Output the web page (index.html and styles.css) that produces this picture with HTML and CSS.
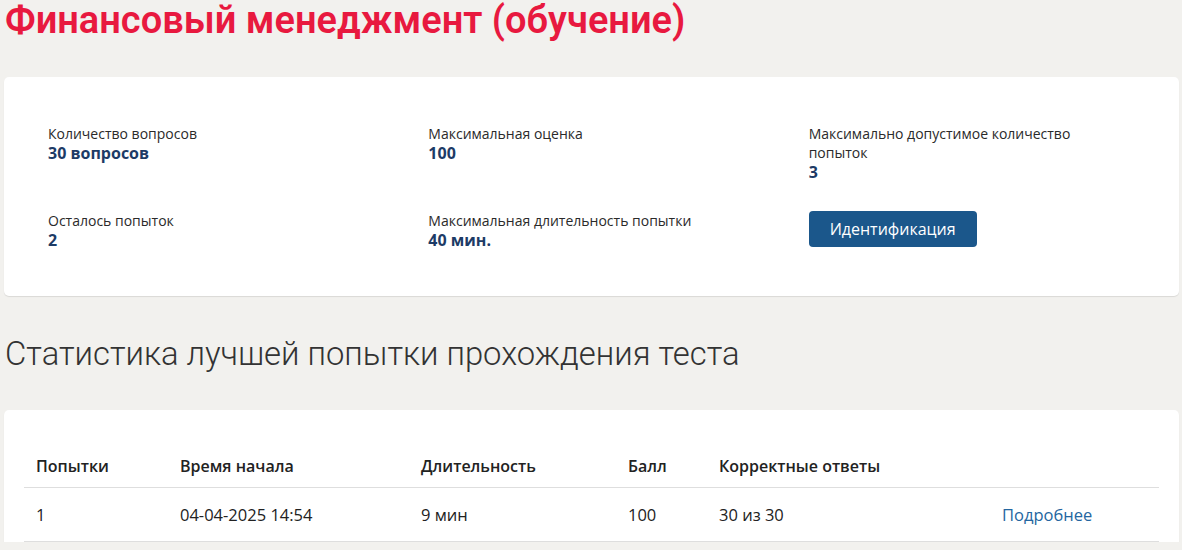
FILE: index.html
```html
<!DOCTYPE html>
<html lang="ru">
<head>
<meta charset="utf-8">
<title>Финансовый менеджмент (обучение)</title>
<link rel="stylesheet" href="styles.css">
</head>
<body>
<div class="page">
  <h1 class="title">Финансовый менеджмент (обучение)</h1>

  <section class="card info-card">
    <div class="info-grid">
      <div class="info-item">
        <div class="info-label">Количество вопросов</div>
        <div class="info-value">30 вопросов</div>
      </div>
      <div class="info-item">
        <div class="info-label">Максимальная оценка</div>
        <div class="info-value">100</div>
      </div>
      <div class="info-item">
        <div class="info-label">Максимально допустимое количество попыток</div>
        <div class="info-value">3</div>
      </div>
      <div class="info-item">
        <div class="info-label">Осталось попыток</div>
        <div class="info-value">2</div>
      </div>
      <div class="info-item">
        <div class="info-label">Максимальная длительность попытки</div>
        <div class="info-value">40 мин.</div>
      </div>
      <div class="info-item">
        <button class="btn" type="button">Идентификация</button>
      </div>
    </div>
  </section>

  <h2 class="section-title">Статистика лучшей попытки прохождения теста</h2>

  <section class="card table-card">
    <table class="stats">
      <thead>
        <tr>
          <th class="c1">Попытки</th>
          <th class="c2">Время начала</th>
          <th class="c3">Длительность</th>
          <th class="c4">Балл</th>
          <th class="c5">Корректные ответы</th>
          <th class="c6"></th>
        </tr>
      </thead>
      <tbody>
        <tr>
          <td>1</td>
          <td>04-04-2025 14:54</td>
          <td>9 мин</td>
          <td>100</td>
          <td>30 из 30</td>
          <td><a class="more" href="#">Подробнее</a></td>
        </tr>
      </tbody>
    </table>
  </section>
</div>
</body>
</html>
```

FILE: styles.css
```css
* { box-sizing: border-box; }

html, body {
  margin: 0;
  padding: 0;
  background: #f2f1ee;
}

body {
  font-family: "Open Sans", "Noto Sans", sans-serif;
  color: #222;
}

.page {
  padding: 0 3px 0 4px;
}

.title {
  margin: 0;
  padding: 0 0 0 1px;
  font-family: "Roboto", "Noto Sans", sans-serif;
  font-weight: 600;
  font-size: 38px;
  line-height: 40px;
  color: #e8193f;
  height: 77px;
}

.card {
  background: #fff;
  border-radius: 5px;
  box-shadow: 0 1px 1px rgba(0, 0, 0, 0.1);
}

.info-card {
  padding: 47px 60px 45px 44px;
}

.info-grid {
  display: grid;
  grid-template-columns: repeat(3, 1fr);
  column-gap: 70px;
  row-gap: 28px;
}

.info-label {
  font-size: 14px;
  line-height: 19px;
  color: #2a2a2a;
}

.info-value {
  font-size: 16px;
  font-weight: 700;
  line-height: 21px;
  color: #1d3b66;
}

.btn {
  display: block;
  font-family: inherit;
  font-size: 16px;
  color: #fff;
  background: #1b578b;
  border: none;
  border-radius: 4px;
  height: 36px;
  padding: 0 21px;
  cursor: pointer;
}

.section-title {
  margin: 0;
  padding: 39px 0 0 1px;
  height: 114px;
  font-family: "Roboto", "Noto Sans", sans-serif;
  font-weight: 300;
  font-size: 32.8px;
  line-height: 38px;
  color: #333;
}

.table-card {
  padding: 35px 20px 0;
  border-radius: 5px 5px 0 0;
}

.stats {
  width: 100%;
  border-collapse: collapse;
  font-size: 16px;
}

.stats th {
  text-align: left;
  font-weight: 600;
  padding: 10px 12px;
  line-height: 22px;
  color: #222;
  border-bottom: 1px solid #dedede;
}

.stats td {
  padding: 16px 12px 15px;
  line-height: 22px;
  font-size: 16.5px;
  color: #222;
  border-bottom: 1px solid #dedede;
}

.c1 { width: 144px; }
.c2 { width: 241px; }
.c3 { width: 207px; }
.c4 { width: 91px; }
.c5 { width: 283px; }

.more {
  color: #2466a0;
  text-decoration: none;
}
```
